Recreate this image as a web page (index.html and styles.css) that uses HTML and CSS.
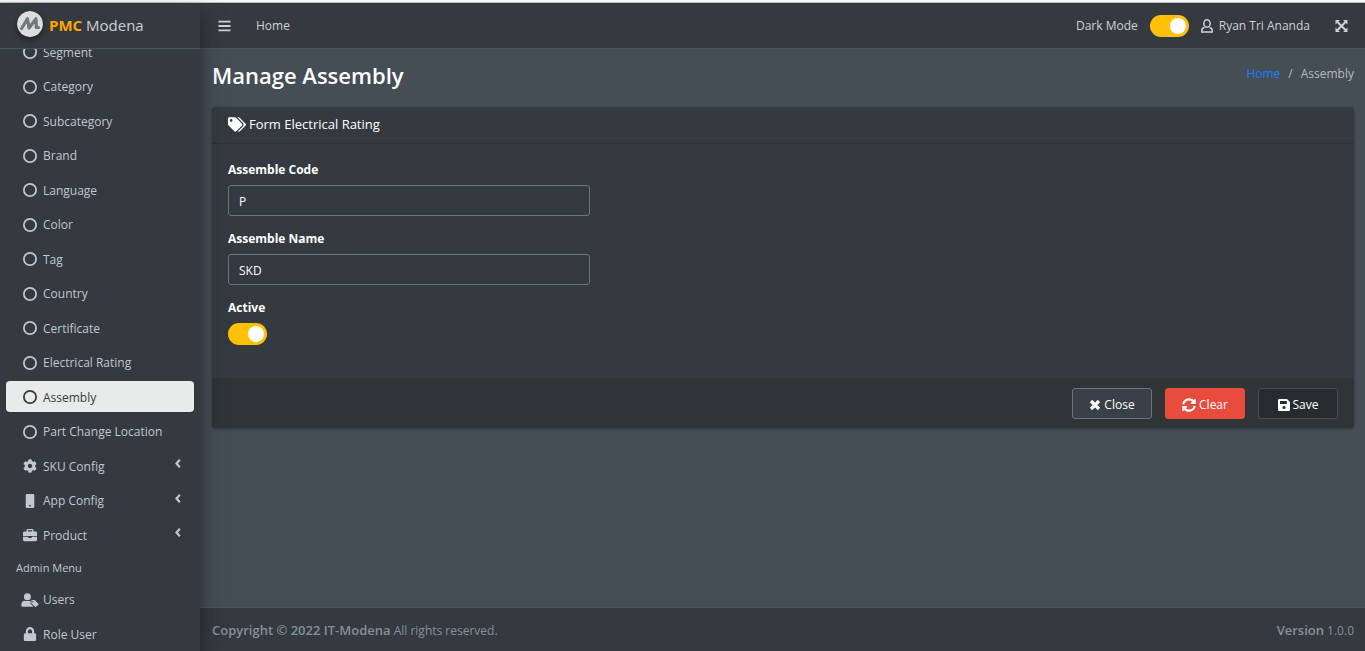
FILE: index.html
```html
<!DOCTYPE html>
<html lang="en">
<head>
<meta charset="utf-8">
<title>PMC Modena - Manage Assembly</title>
<link rel="stylesheet" href="styles.css">
</head>
<body>
<svg class="sprite" aria-hidden="true">
  <symbol id="circle" viewBox="0 0 16 16"><circle cx="8" cy="8" r="7" fill="none" stroke="currentColor" stroke-width="2"/></symbol>
  <symbol id="angle" viewBox="0 0 8 12"><path d="M6 2L2.4 6L6 10" fill="none" stroke="currentColor" stroke-width="2.4"/></symbol>
  <symbol id="cog" viewBox="0 0 512 512"><path d="M487.4 315.7l-42.6-24.6c4.3-23.2 4.3-47 0-70.2l42.6-24.6c4.9-2.8 7.1-8.6 5.5-14-11.1-35.6-30-67.8-54.7-94.6-3.8-4.1-10-5.1-14.8-2.3L380.8 110c-17.9-15.4-38.5-27.3-60.8-35.1V25.8c0-5.6-3.9-10.5-9.4-11.7-36.7-8.2-74.3-7.8-109.2 0-5.5 1.2-9.4 6.1-9.4 11.7V75c-22.2 7.9-42.8 19.8-60.8 35.1L88.7 85.5c-4.9-2.8-11-1.9-14.8 2.3-24.7 26.7-43.6 58.9-54.7 94.6-1.7 5.4.6 11.2 5.5 14L67.3 221c-4.3 23.2-4.3 47 0 70.2l-42.6 24.6c-4.9 2.8-7.1 8.6-5.5 14 11.1 35.6 30 67.8 54.7 94.6 3.8 4.1 10 5.1 14.8 2.3l42.6-24.6c17.9 15.4 38.5 27.3 60.8 35.1v49.2c0 5.6 3.9 10.5 9.4 11.7 36.7 8.2 74.3 7.8 109.2 0 5.5-1.2 9.4-6.1 9.4-11.7v-49.2c22.2-7.9 42.8-19.8 60.8-35.1l42.6 24.6c4.9 2.8 11 1.9 14.8-2.3 24.7-26.7 43.6-58.9 54.7-94.6 1.5-5.5-.7-11.3-5.6-14.1zM256 336c-44.1 0-80-35.9-80-80s35.9-80 80-80 80 35.9 80 80-35.9 80-80 80z"/></symbol>
  <symbol id="mobile" viewBox="0 0 16 16"><path fill-rule="evenodd" d="M4.600 0h6.800a1.500 1.500 0 0 1 1.500 1.500v13a1.500 1.500 0 0 1-1.500 1.500H4.600A1.500 1.500 0 0 1 3.100 14.500V1.500A1.500 1.500 0 0 1 4.600 0zM8 12.400a1 1 0 1 0 0 2a1 1 0 0 0 0-2z"/></symbol>
  <symbol id="briefcase" viewBox="-1 -1 18 16"><path fill-rule="evenodd" d="M4 3V1.600A1.600 1.600 0 0 1 5.600 0h4.800A1.600 1.600 0 0 1 12 1.600V3h2.500A1.500 1.500 0 0 1 16 4.500V8H0V4.500A1.500 1.500 0 0 1 1.500 3zM5.500 3h5V1.500h-5zM0 9h6v1.500h4V9h6v3.500a1.500 1.500 0 0 1-1.500 1.500h-13A1.500 1.500 0 0 1 0 12.500z"/></symbol>
  <symbol id="usertag" viewBox="0 0 20 16"><circle cx="7" cy="4.300" r="4"/><path d="M4.300 9h5.400l1 .2v3l3.500 3.500H1.400A1.200 1.200 0 0 1 .2 14.500V13A4 4 0 0 1 4.300 9z"/><path fill-rule="evenodd" d="M11.700 8h3.600l4.300 4.200a.9 .9 0 0 1 0 1.200l-2.700 2.400a.9 .9 0 0 1-1.200 0L11.500 11.800zM13.200 9.200a.8 .8 0 1 0 0 1.600a.8 .8 0 0 0 0-1.600z"/></symbol>
  <symbol id="lock" viewBox="0 0 448 512"><path d="M400 224h-24v-72C376 68.200 307.800 0 224 0S72 68.200 72 152v72H48c-26.500 0-48 21.500-48 48v192c0 26.500 21.500 48 48 48h352c26.500 0 48-21.500 48-48V272c0-26.500-21.500-48-48-48zm-104 0H152v-72c0-39.700 32.300-72 72-72s72 32.300 72 72v72z"/></symbol>
  <symbol id="tags" viewBox="0 0 640 512"><path d="M497.941 225.941L286.059 14.059A48 48 0 0 0 252.118 0H48C21.490 0 0 21.490 0 48v204.118a48 48 0 0 0 14.059 33.941l211.882 211.882c18.744 18.745 49.136 18.746 67.882 0l204.118-204.118c18.745-18.745 18.745-49.137 0-67.882zM112 160c-26.510 0-48-21.490-48-48s21.490-48 48-48 48 21.490 48 48-21.490 48-48 48zm513.941 133.823L421.823 497.941c-18.745 18.745-49.137 18.745-67.882 0l-.36-.36L527.640 323.522c16.999-16.999 26.360-39.600 26.360-63.640s-9.362-46.641-26.360-63.640L331.397 0h48.721a48 48 0 0 1 33.941 14.059l211.882 211.882c18.745 18.745 18.745 49.137 0 67.882z"/></symbol>
  <symbol id="times" viewBox="0 0 12 12"><path d="M2 2L10 10M10 2L2 10" stroke="currentColor" stroke-width="3.200"/></symbol>
  <symbol id="sync" viewBox="0 0 512 512"><path d="M370.720 133.280C339.458 104.008 298.888 87.962 255.848 88c-77.458.068-144.328 53.178-162.791 126.850-1.344 5.363-6.122 9.150-11.651 9.150H24.103c-7.498 0-13.194-6.807-11.807-14.176C33.933 94.924 134.813 8 256 8c66.448 0 126.791 26.136 171.315 68.685L463.030 40.970C478.149 25.851 504 36.559 504 57.941V192c0 13.255-10.745 24-24 24H345.941c-21.382 0-32.090-25.851-16.971-40.971l41.750-41.749zM32 296h134.059c21.382 0 32.090 25.851 16.971 40.971l-41.750 41.750c31.262 29.273 71.835 45.319 114.876 45.280 77.418-.07 144.315-53.144 162.787-126.849 1.344-5.363 6.122-9.150 11.651-9.150h57.304c7.498 0 13.194 6.807 11.807 14.176C478.067 417.076 377.187 504 256 504c-66.448 0-126.791-26.136-171.315-68.685L48.970 471.030C33.851 486.149 8 475.441 8 454.059V320c0-13.255 10.745-24 24-24z"/></symbol>
  <symbol id="save" viewBox="0 0 12 12"><path fill-rule="evenodd" d="M1.300 0H9L12 3V10.700A1.300 1.300 0 0 1 10.700 12H1.300A1.300 1.300 0 0 1 0 10.700V1.300A1.300 1.300 0 0 1 1.300 0zM2 2V5H8.800V2zM6 6.900a1.600 1.600 0 1 0 0 3.200a1.600 1.600 0 0 0 0-3.200z"/></symbol>
  <symbol id="bars" viewBox="0 0 12 12"><path d="M0 1.700H12M0 6H12M0 10.300H12" stroke="currentColor" stroke-width="1.800"/></symbol>
  <symbol id="user" viewBox="0 0 12 14"><ellipse cx="6" cy="4.500" rx="3.200" ry="3.700" fill="none" stroke="currentColor" stroke-width="1.500"/><path d="M3.600 8.600C1.800 9 .8 10 .8 11.600V13H11.200V11.600C11.200 10 10.200 9 8.400 8.600" fill="none" stroke="currentColor" stroke-width="1.500"/></symbol>
  <symbol id="expand" viewBox="0 0 12 12"><path d="M0 0h4.500L0 4.500zM12 0v4.500L7.500 0zM0 12V7.500L4.500 12zM12 12H7.500L12 7.500z"/><path d="M2 2L10 10M10 2L2 10" stroke="currentColor" stroke-width="2"/></symbol>
</svg>

<div class="topline"></div>
<div class="app">
  <aside class="sidebar">
    <a class="brand" href="#">
      <svg class="logo" viewBox="0 0 26 26" aria-hidden="true"><circle cx="13" cy="13" r="13" fill="#dcdcdc"/><path d="M4.500 17.500L10.500 7.800L12 17L19 7.800L19.300 16.500L21.500 16.500" fill="none" stroke="#74787a" stroke-width="3.200" stroke-linejoin="round" stroke-linecap="round"/></svg>
      <span><b>PMC</b> Modena</span>
    </a>
    <nav class="menu" aria-label="Main">
      <a class="item" href="#"><svg><use href="#circle"/></svg>Segment</a>
      <a class="item" href="#"><svg><use href="#circle"/></svg>Category</a>
      <a class="item" href="#"><svg><use href="#circle"/></svg>Subcategory</a>
      <a class="item" href="#"><svg><use href="#circle"/></svg>Brand</a>
      <a class="item" href="#"><svg><use href="#circle"/></svg>Language</a>
      <a class="item" href="#"><svg><use href="#circle"/></svg>Color</a>
      <a class="item" href="#"><svg><use href="#circle"/></svg>Tag</a>
      <a class="item" href="#"><svg><use href="#circle"/></svg>Country</a>
      <a class="item" href="#"><svg><use href="#circle"/></svg>Certificate</a>
      <a class="item" href="#"><svg><use href="#circle"/></svg>Electrical Rating</a>
      <a class="item active" href="#" aria-current="page"><svg><use href="#circle"/></svg>Assembly</a>
      <a class="item" href="#"><svg><use href="#circle"/></svg>Part Change Location</a>
      <a class="item" href="#"><svg><use href="#cog"/></svg>SKU Config<svg class="angle"><use href="#angle"/></svg></a>
      <a class="item" href="#"><svg><use href="#mobile"/></svg>App Config<svg class="angle"><use href="#angle"/></svg></a>
      <a class="item" href="#"><svg><use href="#briefcase"/></svg>Product<svg class="angle"><use href="#angle"/></svg></a>
      <div class="heading">Admin Menu</div>
      <a class="item" href="#"><svg class="wide"><use href="#usertag"/></svg>Users</a>
      <a class="item" href="#"><svg><use href="#lock"/></svg>Role User</a>
    </nav>
  </aside>

  <div class="page">
    <header class="navbar">
      <button class="icon-btn" type="button" aria-label="Toggle menu"><svg><use href="#bars"/></svg></button>
      <a class="home" href="#">Home</a>
      <label class="dark" for="dark">Dark Mode</label>
      <input class="switch" id="dark" type="checkbox" checked>
      <a class="account" href="#"><svg><use href="#user"/></svg>Ryan Tri Ananda</a>
      <button class="icon-btn" type="button" aria-label="Full screen"><svg><use href="#expand"/></svg></button>
    </header>

    <main class="content">
      <div class="title-row">
        <h1>Manage Assembly</h1>
        <nav class="crumbs" aria-label="Breadcrumb"><a href="#">Home</a><span>/</span><span>Assembly</span></nav>
      </div>
      <form class="card">
        <h2 class="card-head"><svg><use href="#tags"/></svg>Form Electrical Rating</h2>
        <div class="card-body">
          <div class="field"><label for="code">Assemble Code</label><input class="text" id="code" type="text" value="P"></div>
          <div class="field"><label for="name">Assemble Name</label><input class="text" id="name" type="text" value="SKD"></div>
          <div class="field"><label for="active">Active</label><input class="switch" id="active" type="checkbox" checked></div>
        </div>
        <div class="card-foot">
          <button class="btn close" type="button"><svg><use href="#times"/></svg>Close</button>
          <button class="btn clear" type="button"><svg class="big"><use href="#sync"/></svg>Clear</button>
          <button class="btn save" type="button"><svg><use href="#save"/></svg>Save</button>
        </div>
      </form>
    </main>

    <footer class="footer">
      <span><b>Copyright © 2022 IT-Modena</b> All rights reserved.</span>
      <span><b>Version</b> 1.0.0</span>
    </footer>
  </div>
</div>
</body>
</html>
```

FILE: styles.css
```css
* { box-sizing: border-box; }
body {
  margin: 0;
  height: 100vh;
  display: flex;
  flex-direction: column;
  overflow: hidden;
  font: 12px/1.625 "Segoe UI", "Open Sans", "Noto Sans", sans-serif;
  color: #fff;
  background: #454d55;
}
a { color: inherit; text-decoration: none; }
button, input { font: inherit; color: inherit; margin: 0; }
svg { fill: currentColor; flex: none; }
b { font-weight: 600; }
.sprite { display: none; }
.topline { height: 3px; flex: none; background: #f6f6f6; border-bottom: 1px solid #b9babb; }
.app { flex: 1; min-height: 0; display: flex; }

.sidebar {
  width: 200px;
  flex: none;
  display: flex;
  flex-direction: column;
  background: #343a40;
  color: #c2c7d0;
  box-shadow: 0 14px 28px rgba(0, 0, 0, .25), 0 10px 10px rgba(0, 0, 0, .22);
  z-index: 1;
}
.brand {
  flex: none;
  height: 46px;
  display: flex;
  align-items: center;
  gap: 6px;
  padding-left: 17px;
  border-bottom: 1px solid #4b545c;
  font-size: 15px;
  color: #cdd0d3;
}
.brand b { color: #ffa500; font-weight: 700; }
.logo { width: 26px; height: 26px; margin-bottom: 4px; border-radius: 50%; box-shadow: 0 3px 6px rgba(0, 0, 0, .4); }
.menu {
  flex: 1;
  min-height: 0;
  overflow: hidden;
  display: flex;
  flex-direction: column;
  justify-content: flex-end;
  padding: 0 6px 2px;
}
.item {
  flex: none;
  display: flex;
  align-items: center;
  gap: 5px;
  padding: 7px 12px 5px 16px;
  margin-top: 3px;
  border-radius: 4px;
}
.item svg { width: 16px; height: 14px; }
.item .wide { width: 18px; margin: 0 -1px; }
.item .angle { width: 8px; height: 11px; margin: 0 0 5px auto; }
.item.active { background: #e9ebea; color: #343a40; }
.heading { flex: none; height: 30px; padding: 9px 10px 0; font-size: 11px; }

.page { flex: 1; min-width: 0; display: flex; flex-direction: column; }
.navbar {
  flex: none;
  height: 46px;
  display: flex;
  align-items: center;
  padding: 1px 17px 0 18px;
  background: #343a40;
  border-bottom: 1px solid #4b545c;
  color: #cfd1d3;
}
.icon-btn { display: flex; padding: 0; border: 0; background: none; }
.icon-btn svg { width: 13px; height: 12px; }
.home { margin: 0 auto 0 25px; }
.dark { margin-right: 12px; }
.account { display: flex; align-items: center; gap: 6px; margin: 0 25px 0 12px; }
.account svg { width: 12px; height: 14px; }
.switch {
  appearance: none;
  display: block;
  width: 39px;
  height: 22px;
  padding: 3px;
  border-radius: 11px;
  background: #6c757d;
}
.switch::before { content: ""; display: block; width: 16px; height: 16px; border-radius: 50%; background: #fff; }
.switch:checked { background: #ffc107; }
.switch:checked::before { margin-left: auto; }

.content { flex: 1; padding: 10px 11px 0 12px; }
.title-row { display: flex; justify-content: space-between; height: 48px; }
h1 { margin: 0; font-size: 22px; font-weight: 600; line-height: 33px; }
.crumbs { display: flex; gap: 8px; padding-top: 5px; color: #b5babf; }
.crumbs a { color: #1b7cff; }
.card {
  border-radius: 4px;
  overflow: hidden;
  background: #343a40;
  box-shadow: 0 0 1px rgba(0, 0, 0, .13), 0 1px 3px rgba(0, 0, 0, .3);
}
.card-head {
  display: flex;
  align-items: center;
  gap: 3px;
  height: 37px;
  margin: 0;
  padding: 0 16px 1px;
  border-bottom: 1px solid #2d3237;
  font-size: 13px;
  font-weight: 400;
}
.card-head svg { width: 18px; height: 15px; }
.card-body { display: grid; gap: 13px; padding: 16px 16px 33px; }
.field { max-width: 362px; }
.field label { display: block; height: 20px; margin-bottom: 5px; font-weight: 700; }
.text {
  display: block;
  width: 100%;
  height: 31px;
  padding: 2px 10px 0;
  border: 1px solid #6c757d;
  border-radius: 3px;
  background: #343a40;
}
.card-foot { display: flex; justify-content: flex-end; gap: 13px; padding: 10px 16px 9px; background: #2f3437; }
.btn {
  width: 80px;
  height: 31px;
  display: flex;
  align-items: center;
  justify-content: center;
  gap: 3px;
  padding: 2px 0 0;
  border: 1px solid #6c757d;
  border-radius: 3px;
}
.btn svg { width: 12px; height: 12px; }
.btn .big { width: 14px; height: 14px; }
.close { background: #3a4047; }
.clear { background: #e74c3c; border-color: #e74c3c; }
.save { background: #272b30; border-color: #454d55; }

.footer {
  flex: none;
  height: 44px;
  display: flex;
  align-items: center;
  justify-content: space-between;
  padding: 2px 11px 0 12px;
  background: #343a40;
  border-top: 1px solid #4b545c;
  color: #869099;
}
.footer b { font-size: 13px; font-weight: 600; }
```
